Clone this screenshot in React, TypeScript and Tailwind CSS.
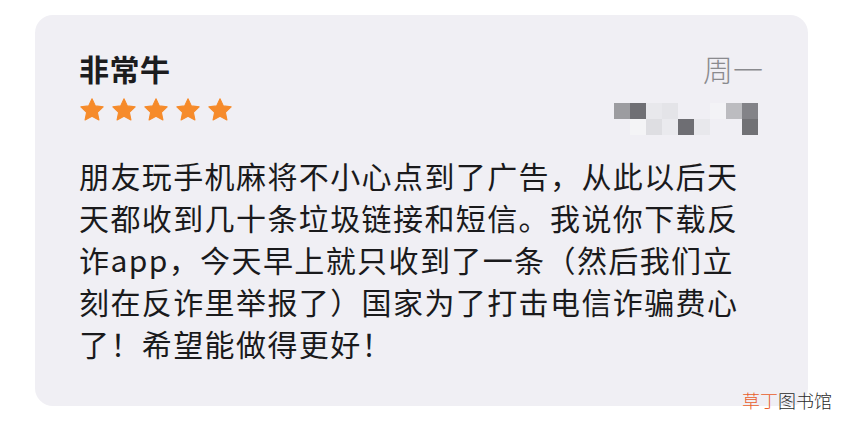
import React from "react";

const lines = [
  "朋友玩手机麻将不小心点到了广告，从此以后天",
  "天都收到几十条垃圾链接和短信。我说你下载反",
  "诈app，今天早上就只收到了一条（然后我们立",
  "刻在反诈里举报了）国家为了打击电信诈骗费心",
  "了！希望能做得更好！",
];

// blurred-out phone number, 16px cells
const mosaic = [
  ["#9c9ca0", "#6f6f74", "#e8e8ec", "#e4e4e8", "", "", "#f3f3f6", "#bcbcc0", "#838388"],
  ["", "#f4f4f6", "#dedee2", "#eaeaee", "#6e6e73", "#e8e8ec", "", "", "#717175"],
];

function Star() {
  return (
    <svg width="26" height="26" viewBox="0 0 24 24">
      <path
        d="M12 1.6l3.1 6.6 7.2.9-5.3 5 1.4 7.1L12 17.7l-6.4 3.5 1.4-7.1-5.3-5 7.2-.9z"
        fill="#f68b2b"
        stroke="#f68b2b"
        strokeWidth="1"
        strokeLinejoin="round"
      />
    </svg>
  );
}

export default function App() {
  return (
    <div
      className="relative w-[842px] h-[435px] bg-white pt-[15px] pl-[35px]"
      style={{ fontFamily: '"Noto Sans CJK SC", "Noto Sans", sans-serif' }}
    >
      <div className="w-[773px] h-[391px] rounded-[18px] bg-[#f0eff4] pt-[35px] pl-[44px] pr-[45px]">
        <div className="flex justify-between">
          <div>
            <div className="text-[30px] leading-[36px] font-bold text-[#1c1c1e] tracking-[0.5px]">非常牛</div>
            <div className="flex gap-[6px] mt-[11px]">
              <Star />
              <Star />
              <Star />
              <Star />
              <Star />
            </div>
          </div>
          <div className="flex flex-col items-end">
            <div className="text-[30px] leading-[36px] text-[#8a8a8e] font-light">周一</div>
            <div className="mt-[17px] mr-[5px]">
              {mosaic.map((row, i) => (
                <div key={i} className="flex">
                  {row.map((c, j) => (
                    <div key={j} className="w-4 h-4" style={{ backgroundColor: c || "transparent" }} />
                  ))}
                </div>
              ))}
            </div>
          </div>
        </div>
        <div className="mt-[19px] text-[30px] leading-[42px] tracking-[1.4px] text-[#1a1a1c]">
          {lines.map((l) => (
            <div key={l} className="whitespace-nowrap">{l}</div>
          ))}
        </div>
      </div>
      <div className="absolute left-[742px] top-[388px] text-[18px] leading-[24px] font-light">
        <span className="text-[#e85d2a]">草丁</span>
        <span className="text-[#2a2a2a]">图书馆</span>
      </div>
    </div>
  );
}
